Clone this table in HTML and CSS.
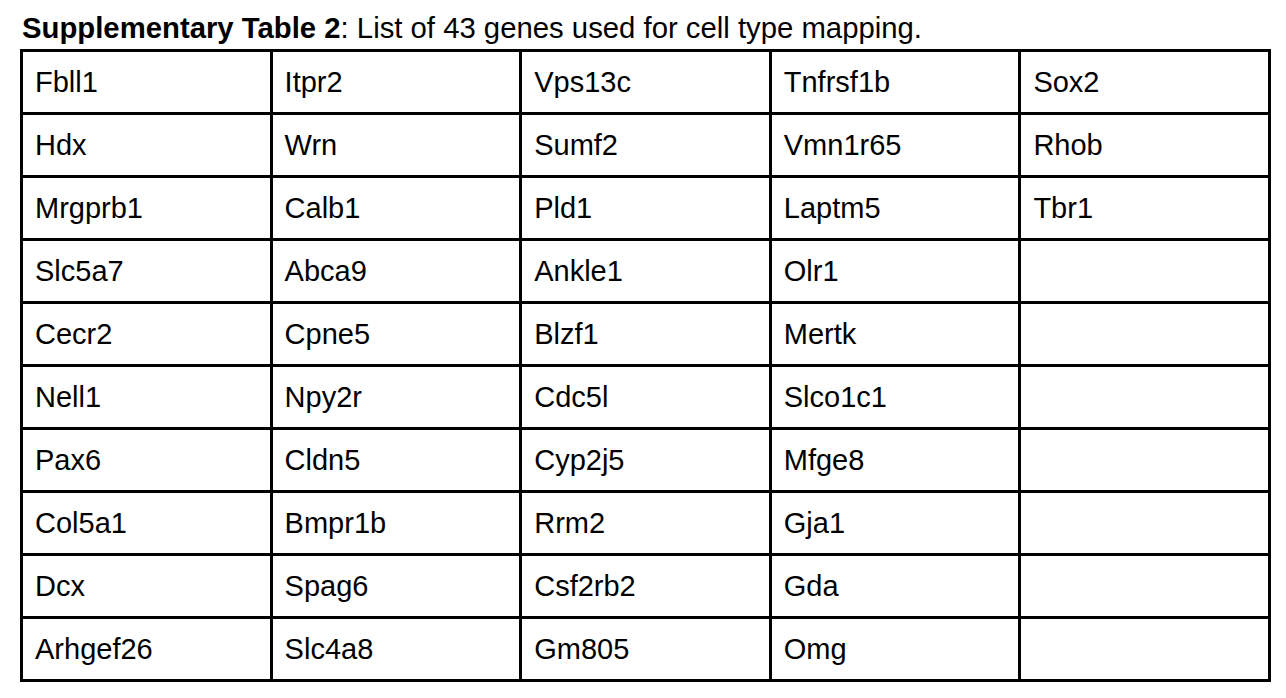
FILE: index.html
```html
<!DOCTYPE html>
<html>
<head>
<meta charset="utf-8">
<link rel="stylesheet" href="styles.css">
</head>
<body>
<div class="page">
  <p class="caption"><b>Supplementary Table 2</b>: List of 43 genes used for cell type mapping.</p>
  <table class="genes">
    <tr><td>Fbll1</td><td>Itpr2</td><td>Vps13c</td><td>Tnfrsf1b</td><td>Sox2</td></tr>
    <tr><td>Hdx</td><td>Wrn</td><td>Sumf2</td><td>Vmn1r65</td><td>Rhob</td></tr>
    <tr><td>Mrgprb1</td><td>Calb1</td><td>Pld1</td><td>Laptm5</td><td>Tbr1</td></tr>
    <tr><td>Slc5a7</td><td>Abca9</td><td>Ankle1</td><td>Olr1</td><td></td></tr>
    <tr><td>Cecr2</td><td>Cpne5</td><td>Blzf1</td><td>Mertk</td><td></td></tr>
    <tr><td>Nell1</td><td>Npy2r</td><td>Cdc5l</td><td>Slco1c1</td><td></td></tr>
    <tr><td>Pax6</td><td>Cldn5</td><td>Cyp2j5</td><td>Mfge8</td><td></td></tr>
    <tr><td>Col5a1</td><td>Bmpr1b</td><td>Rrm2</td><td>Gja1</td><td></td></tr>
    <tr><td>Dcx</td><td>Spag6</td><td>Csf2rb2</td><td>Gda</td><td></td></tr>
    <tr><td>Arhgef26</td><td>Slc4a8</td><td>Gm805</td><td>Omg</td><td></td></tr>
  </table>
</div>
</body>
</html>
```
FILE: styles.css
```css
html, body {
  margin: 0;
  padding: 0;
  background: #ffffff;
}
body {
  font-family: "Liberation Sans", Arial, sans-serif;
  color: #000;
}
.page {
  padding: 11px 0 0 20px;
}
.caption {
  margin: 0 0 5px 2px;
  font-size: 29.3px;
  line-height: 33px;
}
.genes {
  border-collapse: collapse;
  table-layout: fixed;
  width: 1251px;
}
.genes td {
  border: 3px solid #000;
  width: 20%;
  height: 59px;
  padding: 1px 0 0 12px;
  font-size: 29px;
  line-height: 33px;
  vertical-align: middle;
}
```
